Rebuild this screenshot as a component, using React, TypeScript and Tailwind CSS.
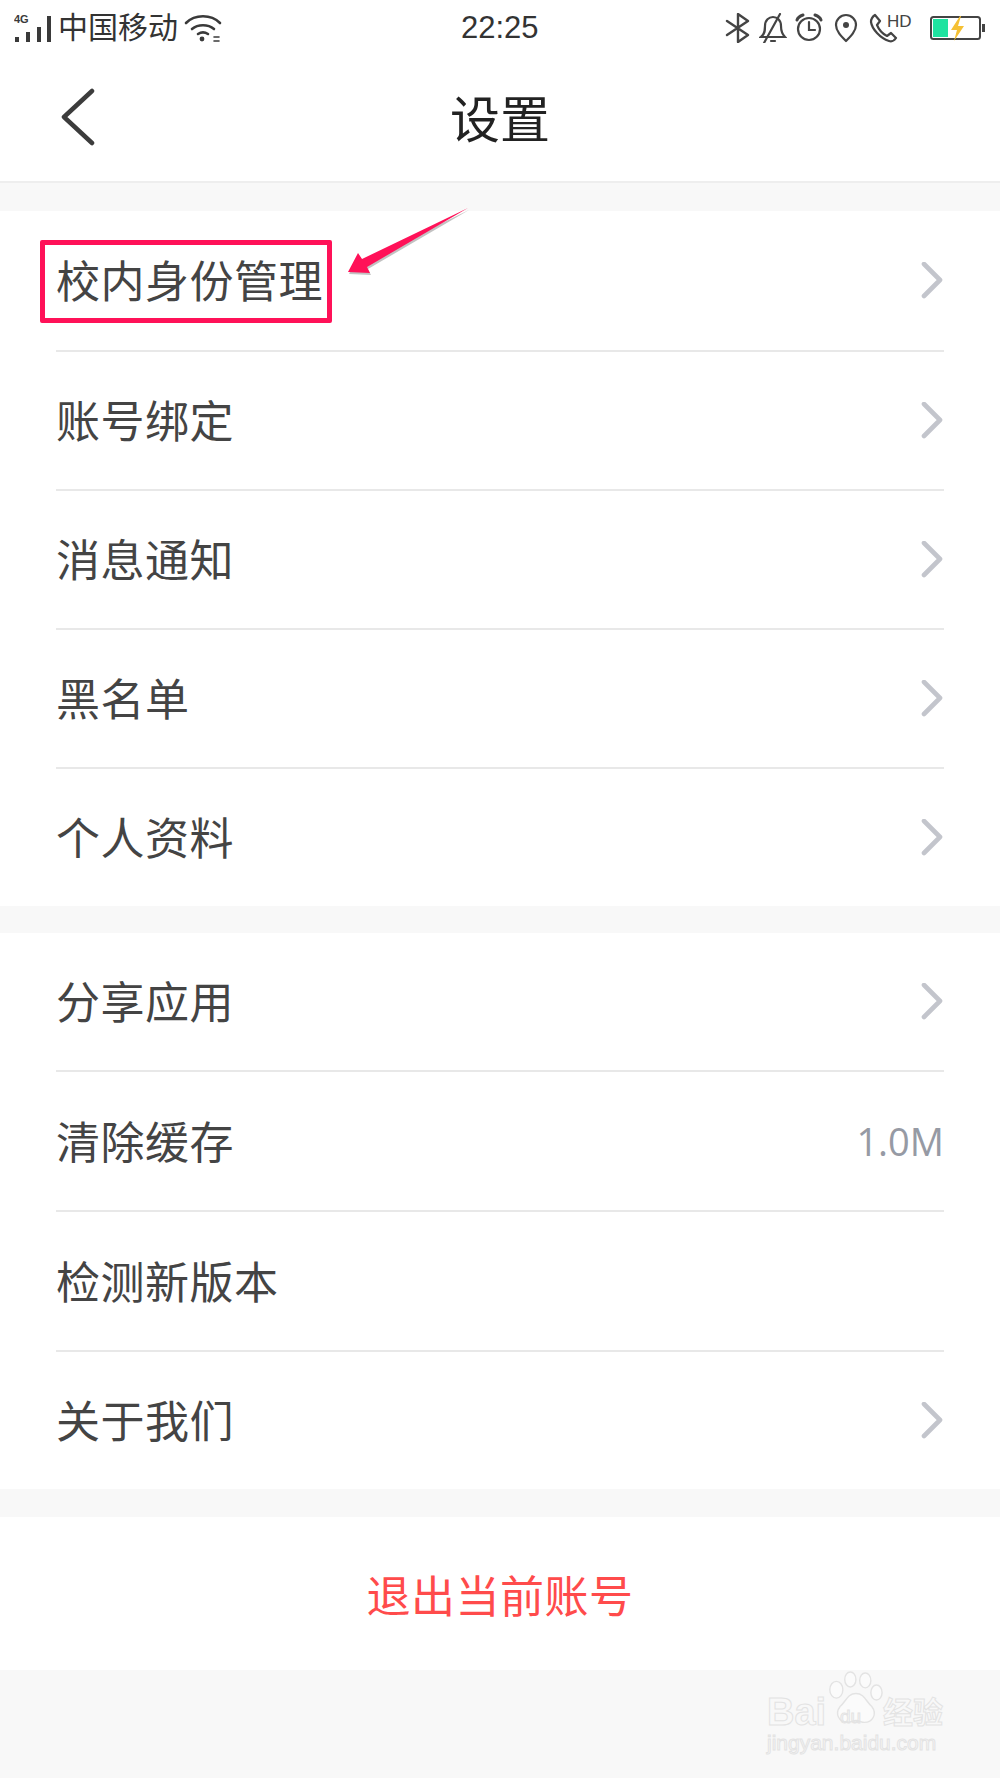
const cjk = "font-['Noto_Sans_CJK_SC','Noto_Sans',sans-serif]";

function Chevron() {
  return (
    <svg width="24" height="38" viewBox="0 0 24 38" fill="none" className="shrink-0">
      <path d="M4 2l16 16L4 34" stroke="#c3c5cc" strokeWidth="4.6" strokeLinecap="round" strokeLinejoin="round" />
    </svg>
  );
}

function Row({ label, value, arrow = true, height = "h-[139px]", last = false }: { label: string; value?: string; arrow?: boolean; height?: string; last?: boolean }) {
  return (
    <div className={`${height} flex items-center justify-between mx-14 ${last ? "" : "border-b-2 border-[#e8e8e8]"}`}>
      <span className="text-[44px] tracking-[0.5px] text-[#444444] leading-none pb-[3px]">{label}</span>
      {value && <span className="text-[38px] text-[#969aa4] leading-none font-['Open_Sans',sans-serif]">{value}</span>}
      {arrow && <Chevron />}
    </div>
  );
}

function StatusBar() {
  return (
    <div className="h-[55px] flex items-center justify-between pl-[14px] pr-[14px] text-[#333333] relative">
      <div className="flex items-center">
        <svg width="38" height="30" viewBox="0 0 38 30" fill="#3a3a3a">
          <text x="0" y="10" fontSize="11" fontWeight="700" fontFamily="Liberation Sans">4G</text>
          <rect x="1" y="24" width="4" height="5" />
          <rect x="12" y="19" width="4" height="10" />
          <rect x="23" y="14" width="4" height="15" />
          <rect x="33" y="3" width="4" height="26" />
        </svg>
        <span className="text-[30px] leading-none ml-[6px] pb-[5px]">中国移动</span>
        <svg width="38" height="30" viewBox="0 0 38 30" fill="none" stroke="#3a3a3a" strokeWidth="2.6" strokeLinecap="round" className="ml-[6px]">
          <path d="M2 10C11 1 27 1 36 10" />
          <path d="M8 16c6-5 16-5 22 0" />
          <path d="M14 21c3-2 7-2 10 0" />
          <circle cx="18" cy="26" r="2.4" fill="#3a3a3a" stroke="none" />
          <path d="M30 24h5M30 28h5" strokeWidth="1.6" />
        </svg>
      </div>
      <span className="absolute left-[461px] top-[10px] text-[31px] leading-[36px] font-['Liberation_Sans',sans-serif]">22:25</span>
      <div className="flex items-center">
        <svg width="26" height="30" viewBox="0 0 26 30" fill="none" stroke="#444" strokeWidth="2.4" strokeLinejoin="round" strokeLinecap="round">
          <path d="M2 8l21 14-10 7V1l10 7L2 22" />
        </svg>
        <svg width="28" height="30" viewBox="0 0 28 30" fill="none" stroke="#444" strokeWidth="2.2" strokeLinecap="round" className="ml-[8px]">
          <path d="M2 24c4-3 4-7 4-11 0-6 4-9 8-9s8 3 8 9c0 4 1 8 4 11z" />
          <path d="M5 30L21 1" />
          <path d="M12 28h4" />
        </svg>
        <svg width="28" height="30" viewBox="0 0 28 30" fill="none" stroke="#444" strokeWidth="2.2" strokeLinecap="round" className="ml-[8px]">
          <circle cx="14" cy="16" r="11" />
          <path d="M14 9v8h6" />
          <path d="M2 7c1-3 3-4 6-5M26 7c-1-3-3-4-6-5" strokeWidth="3" />
        </svg>
        <svg width="24" height="30" viewBox="0 0 24 30" fill="none" stroke="#444" strokeWidth="2.2" className="ml-[11px]">
          <path d="M12 28C7 23 2 18 2 12a10 10 0 0 1 20 0c0 6-5 11-10 16z" strokeLinejoin="round" />
          <circle cx="12" cy="12" r="3" fill="#444" stroke="none" />
        </svg>
        <svg width="44" height="30" viewBox="0 0 44 30" fill="none" stroke="#444" strokeWidth="2.2" className="ml-[11px]" strokeLinejoin="round">
          <path d="M6 2l5 6-3 4c2 5 6 9 10 11l4-3 5 5c-2 3-4 4-7 3C11 25 3 16 2 9c0-3 1-5 4-7z" />
          <text x="18" y="14" fontSize="17" fill="#444" stroke="none" fontFamily="Liberation Sans">HD</text>
        </svg>
        <svg width="56" height="26" viewBox="0 0 56 26" fill="none" className="ml-[17px]">
          <rect x="1" y="2" width="49" height="22" rx="2.5" stroke="#444" strokeWidth="2" />
          <rect x="3" y="4" width="15" height="18" fill="#1fe3a0" />
          <path d="M30 1l-9 14h6l-3 11 10-15h-6l3-10z" fill="#f5c033" />
          <rect x="52" y="9" width="3" height="8" fill="#444" />
        </svg>
      </div>
    </div>
  );
}

function Watermark() {
  const ghost = "text-transparent [-webkit-text-stroke:1px_#e3e3e3] leading-none";
  return (
    <div className="absolute left-[764px] top-[1670px] w-[200px] h-[100px]">
      <svg width="56" height="60" viewBox="0 0 60 62" fill="#fbfbfb" stroke="#e3e3e3" strokeWidth="1.5" className="absolute left-[63px] top-0">
        <ellipse cx="10" cy="20" rx="7" ry="9" />
        <ellipse cx="25" cy="9" rx="6" ry="8" />
        <ellipse cx="41" cy="10" rx="6" ry="8" />
        <ellipse cx="53" cy="23" rx="6" ry="8" />
        <path d="M31 24c9 0 11 9 17 14 6 8 1 17-8 17-3 0-6-2-9-2s-6 2-9 2c-9 0-14-9-8-17 6-5 8-14 17-14z" />
      </svg>
      <span className={`absolute left-[3px] top-[23px] text-[38px] font-bold font-['Liberation_Sans',sans-serif] ${ghost}`}>Bai</span>
      <span className={`absolute left-[76px] top-[37px] text-[19px] font-['Liberation_Sans',sans-serif] ${ghost}`}>du</span>
      <span className={`absolute left-[119px] top-[25px] text-[30px] font-bold font-['Noto_Sans_CJK_SC',sans-serif] ${ghost}`}>经验</span>
      <span className={`absolute left-[3px] top-[62px] text-[21px] font-['Liberation_Sans',sans-serif] ${ghost}`}>jingyan.baidu.com</span>
    </div>
  );
}

export default function App() {
  return (
    <div className={`relative w-[1000px] h-[1778px] bg-[#f8f8f8] overflow-hidden ${cjk}`}>
      <div className="bg-white">
        <StatusBar />
        <div className="h-[128px] relative flex items-center justify-center pb-[4px] border-b-2 border-[#eeeeee]">
          <svg width="34" height="58" viewBox="0 0 34 58" fill="none" className="absolute left-[61px] top-[33px]">
            <path d="M31 3L3 29l28 26" stroke="#3c3c3c" strokeWidth="4.5" strokeLinecap="round" strokeLinejoin="round" />
          </svg>
          <span className="text-[50px] text-[#222222] leading-none">设置</span>
        </div>
      </div>

      <div className="mt-[28px] bg-white">
        <Row label="校内身份管理" height="h-[141px]" />
        <Row label="账号绑定" />
        <Row label="消息通知" />
        <Row label="黑名单" />
        <Row label="个人资料" height="h-[137px]" last />
      </div>

      <div className="mt-[27px] bg-white">
        <Row label="分享应用" />
        <Row label="清除缓存" value="1.0M" arrow={false} height="h-[140px]" />
        <Row label="检测新版本" arrow={false} height="h-[140px]" />
        <Row label="关于我们" height="h-[137px]" last />
      </div>

      <div className="mt-[28px] h-[153px] bg-white flex items-center justify-center">
        <span className="text-[44px] tracking-[0.5px] text-[#ff4b4b] leading-none">退出当前账号</span>
      </div>

      {/* annotation drawn over the first row */}
      <div className="absolute left-[40px] top-[240px] w-[292px] h-[83px] border-[5px] border-[#ff1158] rounded-[2px]" />
      <svg width="140" height="90" viewBox="340 200 140 90" className="absolute left-[340px] top-[200px]">
        <polygon points="348,272 358,253 362,259 468,208 367,267 370,273" fill="#777" opacity="0.45" transform="translate(1 2)" />
        <polygon points="348,272 358,253 362,259 468,208 367,267 370,273" fill="#ff1158" />
      </svg>

      <Watermark />
    </div>
  );
}
